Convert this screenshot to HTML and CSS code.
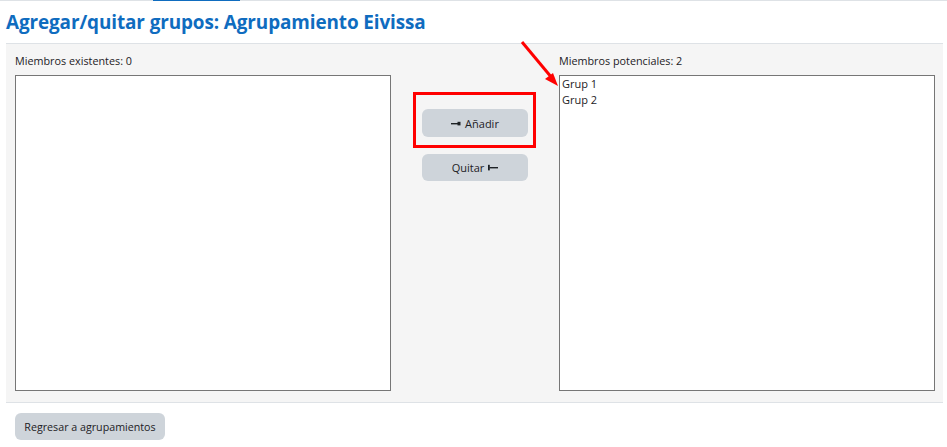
FILE: index.html
```html
<!DOCTYPE html>
<html lang="es">
<head>
    <meta charset="UTF-8">
    <meta name="viewport" content="width=device-width, initial-scale=1.0">
    <title>Agregar/quitar grupos</title>
    <link rel="stylesheet" href="styles.css">
</head>
<body>
    <div class="tabs"><div class="tab-active"></div></div>

    <div class="page">
        <h2 class="page-title">Agregar/quitar grupos: Agrupamiento Eivissa</h2>

        <div class="assign-panel">
            <div class="column">
                <label class="list-label">Miembros existentes: 0</label>
                <div class="listbox"></div>
            </div>

            <div class="middle">
                <button class="btn">
                    <svg class="btn-icon" width="10" height="7" viewBox="0 0 10 7"><rect x="0" y="3" width="7" height="1.4" fill="#1d2125"/><rect x="6.5" y="1.8" width="3" height="3.6" fill="#1d2125"/></svg>
                    Añadir
                </button>
                <button class="btn">
                    Quitar
                    <svg class="btn-icon" width="10" height="7" viewBox="0 0 10 7"><rect x="0" y="0.8" width="1.8" height="5.6" fill="#1d2125"/><rect x="1.5" y="3" width="8.5" height="1.4" fill="#1d2125"/></svg>
                </button>
            </div>

            <div class="column">
                <label class="list-label">Miembros potenciales: 2</label>
                <div class="listbox">
                    <div class="option">Grup 1</div>
                    <div class="option">Grup 2</div>
                </div>
            </div>
        </div>

        <div class="actions">
            <button class="btn btn-back">Regresar a agrupamientos</button>
        </div>
    </div>

    <!-- annotations drawn over the screenshot -->
    <div class="highlight"></div>
    <svg class="pointer" width="60" height="60" viewBox="0 0 60 60">
        <line x1="8" y1="5" x2="38" y2="41" stroke="#ff0000" stroke-width="3"/>
        <polygon points="44,49 31,42 39,36" fill="#ff0000"/>
    </svg>
</body>
</html>
```

FILE: styles.css
```css
body {
    margin: 0;
    padding: 0;
    font-family: 'Open Sans', 'Noto Sans', sans-serif;
    color: #1d2125;
    background-color: #fff;
}

.tabs {
    height: 1px;
    background-color: #dee2e6;
}

.tab-active {
    margin-left: 153px;
    width: 87px;
    height: 1px;
    background-color: #0f6cbf;
}

.page {
    padding: 0 4px 0 6px;
}

.page-title {
    margin: 0;
    padding: 9px 0 9px;
    font-size: 18.9px;
    line-height: 24px;
    font-weight: 700;
    color: #0f6cbf;
    letter-spacing: -0.1px;
}

.assign-panel {
    display: flex;
    background-color: #f5f5f5;
    border-top: 1px solid #dee2e6;
    border-bottom: 1px solid #dee2e6;
    padding: 8px 8px 11px 9px;
}

.column {
    display: flex;
    flex-direction: column;
    width: 376px;
}

.list-label {
    font-size: 10.8px;
    line-height: 18px;
    margin-bottom: 5px;
}

.listbox {
    height: 314px;
    background-color: #fff;
    border: 1px solid #767676;
    font-size: 11px;
    line-height: 16px;
    padding-left: 2px;
}

.middle {
    flex: 1;
    display: flex;
    flex-direction: column;
    align-items: center;
    padding-top: 57px;
    gap: 17px;
}

.btn {
    display: flex;
    align-items: center;
    justify-content: center;
    gap: 4px;
    width: 106px;
    height: 28px;
    padding: 0;
    border: none;
    border-radius: 6px;
    background-color: #ced4da;
    color: #1d2125;
    font-family: inherit;
    font-size: 11px;
    cursor: pointer;
}

.btn:last-child {
    height: 27px;
}

.btn-icon {
    display: block;
}

.actions {
    padding: 10px 0 0 9px;
}

.btn-back {
    width: 150px;
    height: 28px;
    font-size: 10.7px;
}

.highlight {
    position: absolute;
    left: 413px;
    top: 92px;
    width: 117px;
    height: 50px;
    border: 3px solid #ff0000;
}

.pointer {
    position: absolute;
    left: 514px;
    top: 37px;
}
```
